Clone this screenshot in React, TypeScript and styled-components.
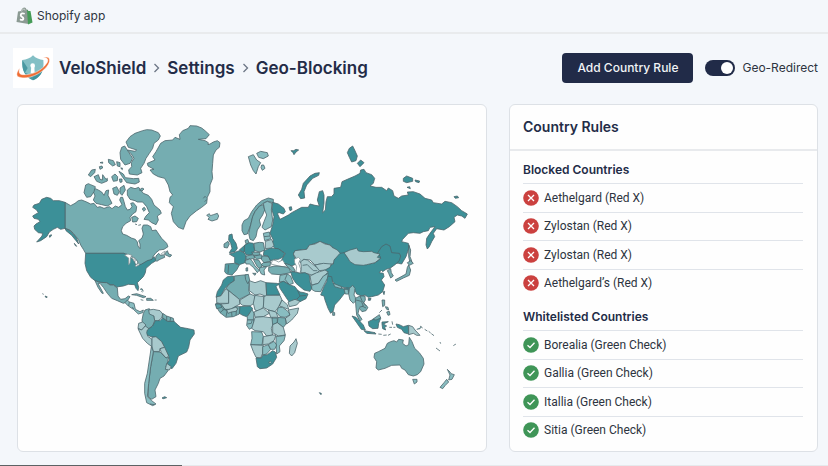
import React, { useState } from "react";
import styled, { createGlobalStyle } from "styled-components";

const GlobalStyle = createGlobalStyle`
  *, *::before, *::after { box-sizing: border-box; }
  body {
    margin: 0;
    background: #f4f7fb;
    color: #2d3440;
    font-family: Inter, "Liberation Sans", sans-serif;
    font-size: 12px;
    line-height: 16px;
  }
`;

const Page = styled.div`
  min-height: 100vh;
  display: flex;
  flex-direction: column;
`;

const TopBar = styled.div`
  display: flex;
  align-items: center;
  gap: 4px;
  height: 34px;
  padding: 0 16px;
  border-bottom: 2px solid #e9ebed;
  font-size: 12px;
`;

const Header = styled.header`
  display: flex;
  align-items: center;
  justify-content: space-between;
  height: 70px;
  padding: 0 10px 2px 13px;
`;

const Brand = styled.div`
  display: flex;
  align-items: center;
  gap: 6px;
`;

const LogoTile = styled.div`
  display: flex;
  width: 40px;
  height: 40px;
  background: #fff;
`;

const Crumbs = styled.ol`
  display: flex;
  align-items: center;
  gap: 7px;
  margin: 0;
  padding: 0;
  list-style: none;
  font-size: 17px;
  line-height: 24px;
  font-weight: 600;
  color: #232c47;
`;

const Crumb = styled.li`
  display: flex;
  align-items: center;
  gap: 7px;
`;

const CrumbLink = styled.a`
  color: inherit;
  text-decoration: none;
`;

const Actions = styled.div`
  display: flex;
  align-items: center;
  gap: 12px;
`;

const PrimaryButton = styled.button`
  height: 30px;
  padding: 0 15px;
  border: 0;
  border-radius: 4px;
  background: #212b48;
  color: #f1f4f6;
  font: 500 12px/16px Inter, "Liberation Sans", sans-serif;
  cursor: pointer;
`;

const SwitchLabel = styled.label`
  display: flex;
  align-items: center;
  gap: 7px;
  cursor: pointer;
`;

const SwitchInput = styled.input`
  appearance: none;
  display: flex;
  align-items: center;
  width: 30px;
  height: 16px;
  margin: 0;
  padding: 0 2px;
  border-radius: 8px;
  background: #98a1b0;
  cursor: pointer;

  &::before {
    content: "";
    width: 12px;
    height: 12px;
    border-radius: 50%;
    background: #fff;
  }
  &:checked {
    justify-content: flex-end;
    background: #212b48;
  }
`;

const Main = styled.main`
  display: grid;
  grid-template-columns: 470fr 309fr;
  gap: 22px;
  padding: 0 10px 13px 17px;
`;

const Card = styled.section`
  display: flex;
  flex-direction: column;
  border: 1px solid #dde1e6;
  border-radius: 6px;
  background: #fefefe;
  overflow: hidden;
`;

const MapSvg = styled.svg`
  display: block;
  width: 100%;
  height: auto;
`;

const CardTitle = styled.h2`
  margin: 0;
  padding: 12px 14px 12px 13px;
  border-bottom: 2px solid #e8eaed;
  font-size: 14px;
  line-height: 20px;
  font-weight: 600;
  color: #232c47;
`;

const CardBody = styled.div`
  padding: 0 14px 6px 13px;
`;

const GroupTitle = styled.h3`
  margin: 0;
  padding: 11px 0 5px;
  border-bottom: 1px solid #e0e4ea;
  font-size: 12px;
  line-height: 16px;
  font-weight: 600;
  color: #232c47;
`;

const RuleList = styled.ul`
  display: flex;
  flex-direction: column;
  height: 114px;
  margin: 0;
  padding: 0;
  list-style: none;
  font-family: Roboto, "Liberation Sans", sans-serif;
`;

const RuleItem = styled.li`
  display: flex;
  flex: 1;
  align-items: center;
  gap: 5px;
  border-bottom: 1px solid #e0e4ea;

  &:last-child { border-bottom-color: transparent; }
`;

const ProgressTrack = styled.div`
  height: 1px;
  margin-top: auto;
  background: #e6e9ec;
`;

const ProgressFill = styled.div<{ $percent: number }>`
  width: ${(p) => p.$percent}%;
  height: 1px;
  background: #5c6264;
`;

const ShopifyIcon = () => (
  <svg width="17" height="18" viewBox="0 0 34 36" aria-hidden="true">
    <path d="M4 9 L10 8 Q12 1 17 1 Q20 1 21 5 L24 6 L25 34 L1 30Z" fill="#8b9a93" />
    <path d="M22 5 L25 8 L29 8 L33 31 L24 35Z" fill="#459b57" />
    <path d="M11 9 Q13 3 17 4 L18 7" fill="none" stroke="#dfe6e2" strokeWidth="1.2" />
    <path d="M17.500 13.500 Q9 11 9.500 17 Q10 19 13 20.500 Q16 23 14 25 Q12 27 8 24.500" fill="none" stroke="#fff" strokeWidth="3.600" />
  </svg>
);

const VeloShieldLogo = () => (
  <svg width="40" height="40" viewBox="0 0 120 120" aria-hidden="true">
    <path d="M60 22 C52 31 40 35 28 36 C26 65 34 85 60 97 C86 85 94 65 91 36 C80 35 68 31 60 22Z" fill="#83bfc5" />
    <path d="M28 36 C26 65 34 85 60 97 L60 84 L36 74 L44 60Z" fill="#4a99a2" />
    <path d="M60 97 C76 90 85 80 89 66 L60 82Z" fill="#3f929c" />
    <circle cx="59" cy="53" r="7" fill="#fff" />
    <path d="M55 54 L64 54 L65 74 L53 76Z" fill="#fff" />
    <path d="M90 29 C107 22 116 33 105 51 C88 78 43 97 17 87 C8 83 11 72 20 60 C17 72 18 79 29 80 C57 82 87 67 101 46 C109 34 103 28 90 29Z" fill="#ef6d34" stroke="#fff" strokeWidth="1.500" />
  </svg>
);

const Chevron = () => (
  <svg width="7" height="10" viewBox="0 0 7 10" fill="none" stroke="#6c7685" strokeWidth="1.300" aria-hidden="true">
    <path d="M1.500 1 L5.500 5 L1.500 9" />
  </svg>
);

const StatusIcon = ({ blocked }: { blocked: boolean }) => (
  <svg width="16" height="16" viewBox="0 0 16 16" fill="none" stroke="#fff" strokeWidth="1.300" aria-hidden="true">
    <circle cx="8" cy="8" r="7.800" fill={blocked ? "#cb413f" : "#3f9557"} stroke="none" />
    <path d={blocked ? "M5 5 L11 11 M11 5 L5 11" : "M4.500 8.200 L7 10.500 L11.500 5.700"} />
  </svg>
);

type Shape = [tone: string, d: string];
type Region = { name: string; x: number; y: number; shapes: Shape[] };

const TONES: Record<string, string> = {
  dark: "#3c9098",
  deep: "#579fa5",
  mid: "#75adb1",
  soft: "#89bdc1",
  light: "#a8cacd",
  sea: "#fefefe",
  line: "none",
};

const REGIONS: Region[] = [
  {
    name: "north-america",
    x: 60,
    y: 330,
    shapes: [
      ["mid", "M135 277L152 287 165 280 175 272 185 270 200 276 212 282 222 280 232 292 240 290 252 295 268 290 276 296 286 288 296 292 306 284 299 270 302 262 308 262 312 275 316 290 322 300 330 298 336 290 332 280 340 278 350 290 348 305 338 312 330 322 332 332 318 340 308 350 304 362 308 372 320 376 334 384 346 388 352 396 354 408 360 416 360 402 356 392 366 384 370 372 366 355 370 345 382 345 392 350 396 362 408 360 416 372 425 385 440 400 444 410 432 418 418 420 408 428 400 438 395 450 382 454 372 460 360 466 348 468 354 456 345 445 333 440 320 432 310 430 197 430 190 418 182 405 175 388 160 370 150 360 135 355Z"],
      ["dark", "M135 277L118 272 100 272 92 265 80 262 65 268 58 280 42 285 38 292 50 300 55 308 48 312 38 318 42 325 55 328 60 335 48 342 42 348 44 358 55 368 68 370 66 378 50 396 62 392 80 380 88 366 100 358 112 352 122 358 135 355 150 362 160 372 170 384 176 402 168 392 155 376 138 362 135 355Z"],
      ["dark", "M88 377l6-3 0 4-5 4Z"],
      ["mid", "M163 400l7 9-4-2Z"],
      ["mid", "M322 240L332 232 345 236 356 232 370 250 385 256 395 268 402 285 420 300 424 310 412 318 415 330 408 344 395 338 385 330 372 328 378 318 388 308 380 290 368 276 352 276 345 272 330 268 322 255Z"],
      ["mid", "M358 240l8-6 6 3-6 6Z"],
      ["mid", "M335 322L345 318 355 325 350 335 338 336Z"],
      ["mid", "M368 295l5-3 4 6-5 6-4-4Z"],
      ["mid", "M345 342l6 2M355 346l8-2"],
      ["mid", "M218 240L226 236 235 240 245 246 252 256 258 242 266 240 264 256 270 268 276 280 262 288 245 284 228 280 220 270 225 258Z"],
      ["mid", "M197 225L205 221 212 224 226 230 222 245 212 260 200 262 192 248Z"],
      ["mid", "M205 195L215 180 226 178 224 188 212 200Z"],
      ["mid", "M222 200L235 194 240 208 247 210 248 194 258 208 262 205 262 213 245 220 230 214Z"],
      ["mid", "M275 200L285 192 293 200 292 212 280 214Z"],
      ["mid", "M278 235L290 230 298 245 292 256 282 252Z"],
      ["mid", "M300 234L312 226 316 240 306 256 300 250Z"],
      ["mid", "M297 184L310 192 316 203 340 206 356 205 358 216 345 222 320 218 304 196Z"],
      ["mid", "M298 207l8 0 0 9-6 1Z"],
      ["mid", "M318 96L330 80 345 70 368 62 380 59 395 60 415 68 421 78 415 90 402 100 398 115 388 130 378 145 372 160 362 175 366 188 352 195 328 192 326 180 335 170 334 158 342 145 334 132 322 120 345 124 350 120 325 112Z"],
      ["mid", "M305 112L314 108 325 125 338 145 330 160 315 165 302 148 300 128Z"],
      ["mid", "M265 148l15 4 6 12-8 4-12-10ZM290 155l10 3 0 12-8-2ZM240 158l8-2 0 4ZM238 170l8-2 2 6-8 4ZM302 174l5 0 0 5Z"],
      ["mid", "M433 433L442 422 446 432 455 435 450 441Z"],
    ],
  },
  {
    name: "north-atlantic",
    x: 390,
    y: 330,
    shapes: [
      ["mid", "M92 100L105 92 128 90 135 82 150 88 148 74 158 62 175 55 180 47 200 48 215 54 225 62 238 74 228 86 205 88 225 92 235 98 234 104 240 102 250 96 262 92 270 98 268 112 258 120 250 135 248 160 246 185 248 205 240 225 240 245 232 262 230 280 215 292 200 302 180 318 168 335 160 358 145 352 130 335 124 310 130 290 118 278 120 262 128 255 120 245 115 225 104 205 85 200 70 192 60 180 72 178 54 168 52 160 75 150 68 140 78 125Z"],
      ["mid", "M220 265l5-6 4 4M224 275l6-6"],
      ["soft", "M230 316L238 311 241 317 250 314 262 310 266 318 262 328 246 333 234 328 238 322Z"],
      ["soft", "M355 140L370 134 380 150 392 158 385 170 378 192 370 182 362 165Z"],
      ["soft", "M380 130L392 124 412 128 415 138 400 146 386 142Z"],
      ["soft", "M395 165l6 0 4 10-8 6-4-8Z"],
      ["mid", "M336 345L342 332 355 325 365 305 380 285 395 272 415 264 430 268 430 278 412 274 400 280 388 290 375 305 368 320 362 345 352 372 342 374 336 362Z"],
      ["mid", "M362 345L368 320 375 305 388 288 400 284 404 300 398 315 388 330 392 345 382 360 378 380 370 392 360 388 356 370Z"],
      ["soft", "M400 280L412 274 426 280 424 300 428 330 424 350 405 360 396 352 402 335 410 315 404 300Z"],
      ["dark", "M297 375L306 372 308 385 318 400 322 415 315 425 298 428 306 415 302 400 296 390Z"],
      ["mid", "M282 402l12-8 4 8-6 12-10-2Z"],
    ],
  },
  {
    name: "russia",
    x: 780,
    y: 390,
    shapes: [
      ["dark", "M38 217L55 222 72 235 76 245 70 252 58 248 52 250 60 268 72 262 85 255 95 248 110 240 125 232 145 232 150 222 165 226 178 228 172 210 178 185 188 182 192 195 192 220 188 248 196 240 198 215 202 200 214 200 222 192 222 175 242 172 246 155 262 148 285 138 300 130 302 120 312 118 318 128 335 134 344 145 340 160 330 168 348 172 365 172 380 182 385 174 398 182 402 198 415 205 425 198 445 195 442 186 460 185 480 192 495 205 515 210 520 218 545 222 555 214 575 218 592 230 605 242 622 252 615 265 605 258 592 255 582 262 585 275 568 290 552 300 530 296 520 310 524 320 515 335 508 350 502 357 498 345 500 325 510 310 525 290 510 292 505 302 490 305 480 310 460 308 445 310 428 328 425 335 445 340 448 350 438 380 425 402 415 400 350 396 260 385 240 372 210 345 180 335 150 345 140 358 105 362 100 372 105 385 108 402 95 408 78 402 62 395 76 370 60 360 45 355 35 345 40 330 30 310 38 285 42 260 36 240Z"],
      ["dark", "M87 232l7-2 2 9-6 3Z"],
      ["dark", "M178 128L176 136 158 145 140 165 132 185 134 204 122 206 115 195 125 178 130 160 150 138 165 130Z"],
      ["dark", "M268 55L278 48 284 60 292 78 288 92 275 96 268 82 262 68ZM292 100L302 90 312 98 300 110Z"],
      ["dark", "M93 62l8 0 7-4 8 2-8 6-6 8-3-6Z"],
      ["dark", "M430 145L440 138 458 145 458 154 440 158 430 154ZM465 150l14 3-2 5-10-3ZM441 172l8-2 2 6ZM582 200l10-2 4 5-10 2Z"],
      ["mid", "M446 345L452 360 450 380 456 395 450 398 446 380Z"],
      ["light", "M100 372L105 362 140 358 148 345 165 342 180 334 195 342 210 345 216 352 232 360 243 372 238 385 225 388 222 400 208 404 180 402 165 405 150 390 130 388 128 400 118 395 108 385Z"],
    ],
  },
  {
    name: "asia-pacific",
    x: 900,
    y: 660,
    shapes: [
      ["dark", "M82 140L100 132 102 120 120 100 133 98 142 112 165 130 200 134 225 128 242 115 240 108 232 100 245 80 258 72 270 78 275 98 298 100 302 108 298 122 285 134 270 145 258 148 248 155 244 150 238 158 250 160 252 170 244 180 254 195 248 215 235 225 215 230 205 232 195 225 185 228 170 222 160 200 145 205 110 198 95 180 80 165 76 150Z"],
      ["light", "M132 98L150 90 165 86 170 84 175 93 190 95 215 94 222 98 240 102 232 112 242 115 225 128 200 134 190 136 165 134 150 125 142 112Z"],
      ["dark", "M82 168L95 170 98 188 112 198 130 206 140 204 156 205 152 220 140 215 132 222 118 240 104 255 100 272 92 280 84 265 75 240 72 228 62 225 66 215 72 200 80 185Z"],
      ["mid", "M98 274l6 4 0 8-6 0Z"],
      ["soft", "M100 190L125 200 124 206 104 200Z"],
      ["soft", "M132 208l12 0 2 14-10 0Z"],
      ["soft", "M148 205L158 196 165 205 162 225 170 240 160 250 150 240 146 222Z"],
      ["mid", "M166 235L180 228 195 228 196 240 190 250 204 262 198 272 186 275 178 265 174 280 186 298 180 304 170 285 168 265Z"],
      ["line", "M180 228L186 242 200 258M168 240L184 244 190 258 178 262M186 258L198 264"],
      ["mid", "M262 152L272 146 274 158 280 168 272 174 266 160Z"],
      ["mid", "M285 180L300 172 318 162 322 142 326 135 332 150 328 166 310 174 290 184Z"],
      ["mid", "M322 128L332 122 340 130 328 136Z"],
      ["dark", "M249 216l5-2-2 10ZM205 235l8 0-2 6-6 0Z"],
      ["mid", "M246 240l8 0 0 16-6 4ZM256 260l8 2 2 8-6-2ZM260 276l8-2 2 10-6 2ZM238 278l8-8"],
      ["dark", "M156 288L168 292 190 315 196 330 184 328 170 308Z"],
      ["dark", "M192 332L225 338 228 342 200 340Z"],
      ["dark", "M205 305L220 298 238 290 242 295 236 310 234 325 218 326 207 318Z"],
      ["mid", "M218 298L238 284 242 294 228 300Z"],
      ["dark", "M246 306L265 305 250 312 260 318 254 322 257 330 248 326 246 312Z"],
      ["dark", "M235 342l10 1M250 346l10-1M264 346l8-4M276 304l2 10M268 322l8 0M280 322l6 0"],
      ["dark", "M288 312L298 314 310 320 325 316 326 342 312 338 305 328 292 322Z"],
      ["light", "M326 316L338 320 345 330 360 346 350 346 340 340 326 344Z"],
      ["mid", "M350 328l10-2 4-6M360 318l8 6M374 328l8 5M386 334l6 5M394 341l8 6M420 366l2 5M408 384l12 9M460 377l6-4M465 374l2-1"],
      ["mid", "M224 400L235 395 255 385 262 370 272 365 282 362 290 366 296 358 310 360 308 370 318 378 326 374 328 352 336 365 344 385 358 398 370 415 372 432 362 455 352 464 340 468 325 464 315 450 305 445 300 435 275 436 255 445 235 450 228 444 230 425 222 412Z"],
      ["soft", "M338 478l13 0 0 8-8 6Z"],
      ["soft", "M442 448L450 456 453 461 463 464 456 478 446 480 450 465Z"],
      ["soft", "M440 478L446 486 436 496 428 506 420 502 432 488Z"],
      ["dark", "M58 518l6 2-1 4Z"],
    ],
  },
  {
    name: "europe-africa",
    x: 600,
    y: 660,
    shapes: [
      ["mid", "M135 62l8-4 4 10-8 6Z"],
      ["dark", "M134 75L148 68 160 70 164 92 155 105 138 104 132 92Z"],
      ["mid", "M162 70L178 67 190 68 194 90 180 96 164 92Z"],
      ["dark", "M88 102L102 98 118 92 132 98 138 108 135 128 118 134 104 128 104 112Z"],
      ["dark", "M118 90L134 76 132 97Z"],
      ["deep", "M76 132L104 130 118 135 110 150 96 165 80 162 74 155Z"],
      ["line", "M86 134L84 160"],
      ["mid", "M138 108L160 104 165 114 150 118 138 118Z"],
      ["soft", "M135 122L150 116 158 125 165 138 178 150 172 158 160 142 148 132 138 132Z"],
      ["mid", "M138 144l5-1 0 10-5 0ZM158 160l10 0-3 6Z"],
      ["mid", "M155 96L180 98 178 106 160 106Z"],
      ["mid", "M162 108L184 104 188 114 170 118Z"],
      ["mid", "M160 118L176 120 186 136 182 148 172 140Z"],
      ["mid", "M186 108L206 108 212 124 192 128 184 118Z"],
      ["mid", "M190 128L212 126 210 138 192 140 184 134Z"],
      ["soft", "M180 142L200 140 192 150 194 165 184 162 178 150Z"],
      ["dark", "M192 92L212 84 235 86 254 100 248 112 235 118 225 118 212 122 204 108 190 106Z"],
      ["light", "M196 64L215 58 222 76 214 84 196 86Z"],
      ["soft", "M190 40l18-4 4 20-18 6ZM192 50l18-2"],
      ["sea", "M213 132L218 120 228 122 236 126 248 120 254 130 262 138 248 140 228 136Z"],
      ["mid", "M206 142L225 138 250 140 268 144 272 158 240 164 215 162 206 154Z"],
      ["mid", "M254 130L268 134 280 142 286 154 278 156 266 144Z"],
      ["sea", "M283 118L295 112 301 118 296 130 303 150 299 160 288 155 290 140 284 128Z"],
      ["light", "M302 125L312 118 322 120 335 130 350 142 360 150 350 160 335 165 318 160 302 158 304 145Z"],
      ["line", "M308 136L322 134 340 152 352 152"],
      ["light", "M345 135L370 130 394 132 390 142 375 150 358 152Z"],
      ["light", "M330 168L350 158 375 150 385 156 370 170 355 190 335 195Z"],
      ["soft", "M335 196L355 190 370 168 385 160 382 175 372 195 362 215 345 214 335 208Z"],
      ["dark", "M272 155L285 156 300 160 315 158 328 165 330 185 335 205 330 214 312 210 300 200 288 190 278 175Z"],
      ["soft", "M240 166L262 162 272 168 280 190 268 194 252 184 238 186Z"],
      ["line", "M262 162L255 178 268 194"],
      ["dark", "M235 190L250 184 268 194 285 200 292 210 300 216 312 218 324 222 318 236 300 245 290 238 268 246 262 238 250 220 240 205Z"],
      ["line", "M292 210L300 228 318 226M300 228L290 238"],
      ["light", "M264 246L285 238 300 244 290 255 268 260Z"],
      ["dark", "M82 170L100 168 103 182 88 192 75 205 62 228 48 232 52 215 65 195 70 180Z"],
      ["mid", "M103 182L103 168 140 164 142 182 148 192 146 210 150 222 118 238 78 205 88 192Z"],
      ["mid", "M135 165l10-2 4 18-6 10-6-12Z"],
      ["light", "M148 182L165 188 182 182 198 188 200 230 180 222 165 225 148 212Z"],
      ["dark", "M198 188L230 190 236 192 228 200 240 225 200 226Z"],
      ["light", "M50 230L62 228 78 206 86 214 86 250 58 250 50 248Z"],
      ["light", "M86 212L118 238 120 252 105 260 92 275 75 268 62 252 86 250Z"],
      ["light", "M120 240L150 222 165 228 162 250 150 258 128 256 120 250Z"],
      ["light", "M165 226L192 230 190 262 175 274 165 270 160 250Z"],
      ["light", "M192 230L200 226 240 226 246 240 235 262 225 275 205 270 190 262Z"],
      ["light", "M246 240L262 254 266 268 250 262 238 258Z"],
      ["mid", "M48 250L62 252 75 268 92 268 105 260 120 260 118 282 100 290 78 292 60 278 50 262Z"],
      ["deep", "M46 252l14 0 6 10-16 4Z"],
      ["line", "M60 278L72 268M78 290L82 270M96 290L94 268M108 286L110 262M66 266L92 276"],
      ["light", "M80 270l14-4 12-4 8 4-6 8-14 2-10 4Z"],
      ["dark", "M120 260L150 258 158 265 150 280 140 290 128 286 118 280Z"],
      ["soft", "M142 290L156 268 162 280 160 300 142 300Z"],
      ["light", "M162 276L190 264 208 280 190 290 165 292Z"],
      ["light", "M205 270L228 276 234 292 212 292Z"],
      ["soft", "M235 262L248 262 265 275 270 285 255 292 240 290 230 278Z"],
      ["light", "M265 270L296 264 292 280 275 300 260 312 256 295 270 285Z"],
      ["mid", "M234 292L256 294 258 312 250 322 232 308Z"],
      ["soft", "M142 300l20 0-4 22-10 6-8-12Z"],
      ["line", "M142 312L154 310 156 302"],
      ["light", "M165 292L190 290 218 294 220 310 214 325 218 345 200 348 190 335 165 332 155 325 160 310Z"],
      ["mid", "M216 294l16 0 0 14-14 6Z"],
      ["light", "M218 314L232 308 250 322 256 345 235 348 218 338Z"],
      ["soft", "M155 335L185 336 190 350 186 375 152 374 156 355Z"],
      ["light", "M190 350L218 345 228 345 222 362 205 372 188 374Z"],
      ["soft", "M228 350L256 346 252 362 238 378 240 395 230 402 228 375Z"],
      ["light", "M152 374L190 376 188 400 182 414 168 412 160 395Z"],
      ["soft", "M188 380L205 374 212 388 200 402 188 405Z"],
      ["soft", "M205 374L222 364 230 375 224 388 212 388Z"],
      ["dark", "M168 414L184 414 188 406 202 404 218 392 226 396 230 412 218 432 200 444 180 446 172 440Z"],
      ["soft", "M206 427l5-4 4 4-5 5Z"],
      ["light", "M288 356L292 370 284 398 275 408 268 400 270 378 282 366Z"],
    ],
  },
  {
    name: "south-america",
    x: 180,
    y: 750,
    shapes: [
      ["dark", "M77 10L192 10 205 18 213 24 222 30 228 48 245 42 262 32 276 28 282 20 288 32 275 40 258 55 256 68 250 80 238 92 232 98 236 112 234 122 228 115 224 104 205 103 190 108 176 110 172 112 160 104 150 104 140 98 120 97 105 92 92 82 80 62 75 40Z"],
      ["sea", "M194 16L204 12 216 16 212 22 210 40 206 44 206 24ZM216 20l8 4 2 10-4 0ZM226 46l10-6 2 4-10 6Z"],
      ["mid", "M288 18l8-8 6 6 10-2 2 8-14 6-10 6-4-4Z"],
      ["sea", "M304 12l6-6 6-2-6 12Z"],
      ["mid", "M105 92L120 97 140 98 150 105 160 105 172 114 174 138 182 148 195 146 205 138 210 140 200 156 190 160 172 152 155 145 142 130 130 112 120 100 114 100 130 130 126 130 114 112Z"],
      ["soft", "M195 158L202 150 208 156 222 160 226 178 240 185 250 180 248 188 235 192 220 178 205 168Z"],
      ["line", "M208 156L206 168M222 176L216 172"],
      ["mid", "M215 134l15-3 28 9-8 3-20-7ZM260 145l12 0 8 6-20 0ZM242 149l8 2M284 150l6 0M240 118l6-2 4 8M244 124l4 2"],
      ["mid", "M250 190L255 180 268 176 270 186 282 196 284 212 278 228 262 238 248 225 246 210Z"],
      ["light", "M266 180L280 178 300 182 308 192 305 204 292 214 284 212 282 198 268 192Z"],
      ["mid", "M308 190L320 198 340 205 342 216 322 214 308 204Z"],
      ["line", "M320 198L320 214M332 202L330 214"],
      ["light", "M236 220L248 216 258 225 245 240 234 235Z"],
      ["light", "M234 236L245 240 256 228 272 240 262 258 276 268 276 290 262 280 248 265Z"],
      ["dark", "M262 240L278 228 286 212 300 212 308 204 322 214 342 214 348 220 362 232 385 236 402 240 403 252 390 270 386 292 380 306 355 318 348 340 336 356 318 346 328 330 326 318 314 296 305 275 288 262 272 260 262 255 260 248Z"],
      ["light", "M276 262L288 260 305 275 314 292 300 296 298 305 280 305 276 288Z"],
      ["light", "M300 296L314 292 326 318 318 324 304 308Z"],
      ["mid", "M280 305L300 306 318 324 326 322 322 340 318 350 324 362 312 378 300 385 295 400 285 420 288 440 275 448 264 440 266 400 272 350 278 320Z"],
      ["light", "M320 340l14 10-6 10-12-2Z"],
      ["soft", "M274 290L280 305 272 350 266 400 262 440 275 452 288 462 278 467 260 458 254 430 254 400 262 370 268 330Z"],
      ["dark", "M306 444l8-4 6 3-10 3ZM270 462l14 2"],
      ["dark", "M-53 131l4 2M-45 138l3 5 4-2Z"],
    ],
  },
];

const WorldMap = () => (
  <MapSvg viewBox="54 315 1404 1035" role="img" aria-label="World map of country rules">
    {REGIONS.map((region) => (
      <g key={region.name} transform={`translate(${region.x} ${region.y})`}>
        {region.shapes.map(([tone, d]) => (
          <path
            key={d}
            d={d}
            fill={TONES[tone]}
            stroke={tone === "sea" ? "#7d9296" : "#4b666c"}
            strokeWidth={2.4}
            strokeLinejoin="round"
          />
        ))}
      </g>
    ))}
  </MapSvg>
);

const GROUPS = [
  {
    title: "Blocked Countries",
    blocked: true,
    rules: ["Aethelgard (Red X)", "Zylostan (Red X)", "Zylostan (Red X)", "Aethelgard’s (Red X)"],
  },
  {
    title: "Whitelisted Countries",
    blocked: false,
    rules: ["Borealia (Green Check)", "Gallia (Green Check)", "Itallia (Green Check)", "Sitia (Green Check)"],
  },
];

export default function App() {
  const [redirect, setRedirect] = useState(true);

  return (
    <>
      <GlobalStyle />
      <Page>
        <TopBar>
          <ShopifyIcon />
          <span>Shopify app</span>
        </TopBar>
        <Header>
          <Brand>
            <LogoTile>
              <VeloShieldLogo />
            </LogoTile>
            <nav aria-label="Breadcrumb">
              <Crumbs>
                <Crumb>
                  <CrumbLink href="#home">VeloShield</CrumbLink>
                  <Chevron />
                </Crumb>
                <Crumb>
                  <CrumbLink href="#settings">Settings</CrumbLink>
                  <Chevron />
                </Crumb>
                <Crumb aria-current="page">Geo-Blocking</Crumb>
              </Crumbs>
            </nav>
          </Brand>
          <Actions>
            <PrimaryButton type="button">Add Country Rule</PrimaryButton>
            <SwitchLabel htmlFor="geo-redirect">
              <SwitchInput
                id="geo-redirect"
                type="checkbox"
                role="switch"
                checked={redirect}
                onChange={(e) => setRedirect(e.target.checked)}
              />
              Geo-Redirect
            </SwitchLabel>
          </Actions>
        </Header>
        <Main>
          <Card>
            <WorldMap />
          </Card>
          <Card>
            <CardTitle>Country Rules</CardTitle>
            <CardBody>
              {GROUPS.map((group) => (
                <React.Fragment key={group.title}>
                  <GroupTitle>{group.title}</GroupTitle>
                  <RuleList>
                    {group.rules.map((rule, i) => (
                      <RuleItem key={i}>
                        <StatusIcon blocked={group.blocked} />
                        <span>{rule}</span>
                      </RuleItem>
                    ))}
                  </RuleList>
                </React.Fragment>
              ))}
            </CardBody>
          </Card>
        </Main>
        <ProgressTrack>
          <ProgressFill $percent={22} />
        </ProgressTrack>
      </Page>
    </>
  );
}
